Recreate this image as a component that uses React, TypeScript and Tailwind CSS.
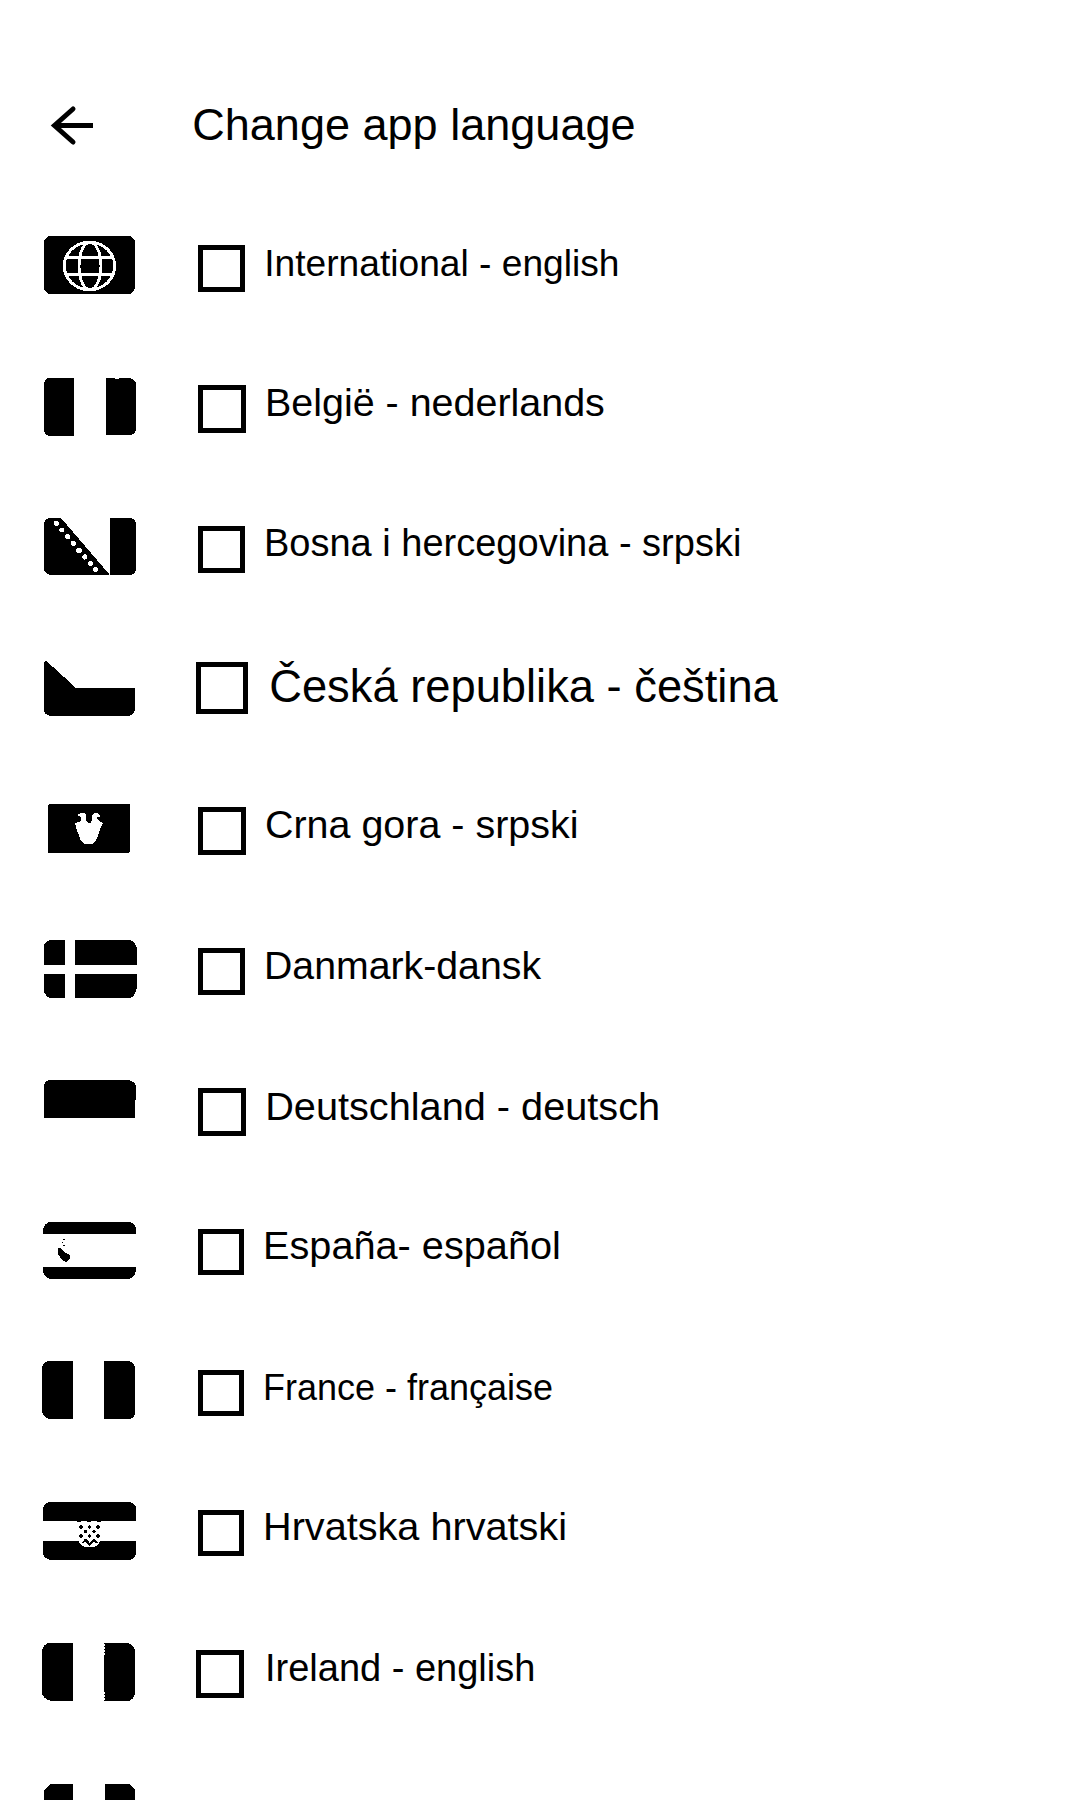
import type { ReactNode } from "react";

type Language = {
  label: string;
  // top edge of the row on the page; the flag drawings use page coordinates
  top: number;
  box: string;
  text: string;
  flag: ReactNode;
};

const languages: Language[] = [
  {
    label: "International - english",
    top: 220,
    box: "mt-[25px] ml-[62px] size-[47px]",
    text: "mt-[18px] ml-[19.3px] text-[37.15px]",
    flag: (
      <>
        <rect x="44" y="236" width="91" height="58" rx="7" />
        <g fill="none" stroke="#fff" strokeWidth="2.9">
          <ellipse cx="89.5" cy="266" rx="25.2" ry="23.8" />
          <ellipse cx="90" cy="266" rx="11" ry="23.8" />
          <path d="M66 257.5H113M66 274.5H113" />
        </g>
      </>
    ),
  },
  {
    label: "België - nederlands",
    top: 361,
    box: "mt-[24px] ml-[62px] size-[48px]",
    text: "mt-[16px] ml-[19px] text-[39.45px]",
    flag: (
      <>
        <path d="M50 378H74V436H51Q44 436 44 429V385Q44 378 50 378Z" />
        <path d="M106 378H115V379H119V378H130Q136 380 136 385V429Q136 434 130 435H106Z" />
      </>
    ),
  },
  {
    label: "Bosna i hercegovina - srpski",
    top: 502,
    box: "mt-[24px] ml-[62px] size-[47px]",
    text: "mt-[16px] ml-[19px] text-[38px]",
    flag: (
      <>
        <path d="M50 518H61L109 574V575H50Q44 573 44 568V524Q44 519 50 518Z" />
        <path d="M110 518H130Q136 519 136 525V568Q136 574 130 575H110Z" />
        <g fill="#fff">
          <circle cx="56.3" cy="523.3" r="2.5" />
          <circle cx="61.8" cy="530" r="2.5" />
          <circle cx="67.6" cy="536.6" r="2.6" />
          <circle cx="73.4" cy="543.5" r="2.6" />
          <circle cx="79" cy="550.3" r="2.8" />
          <circle cx="84.8" cy="557" r="2.6" />
          <circle cx="90.5" cy="563.5" r="2.6" />
          <circle cx="95.6" cy="569.5" r="2.6" />
        </g>
      </>
    ),
  },
  {
    label: "Česká republika - čeština",
    top: 643,
    box: "mt-[19px] ml-[60px] size-[52px]",
    text: "mt-[19px] ml-[21.2px] text-[45.3px]",
    flag: <path d="M44 662L46.5 661L76 688H135V709Q134 715 129 716H50Q44 714 44 710Z" />,
  },
  {
    label: "Crna gora - srpski",
    top: 784,
    box: "mt-[23px] ml-[62px] size-[48px]",
    text: "mt-[15px] ml-[19px] text-[39.45px]",
    flag: (
      <>
        <rect x="48" y="804" width="82" height="49" rx="2" />
        <path
          fill="#fff"
          d="M78.5 814L82 813H84L86 815L86 820L88 823H91L92 820V815L94 813H97L100 816L99 817H97L98 820L103 823L101 827L97 838L95 842L92 844H85L81 841L78 833L76 827L75 823L79 822L81 820V817L78 816Z"
        />
      </>
    ),
  },
  {
    label: "Danmark-dansk",
    top: 925,
    box: "mt-[23px] ml-[62px] size-[47px]",
    text: "mt-[15px] ml-[19px] text-[39.25px]",
    flag: (
      <>
        <path d="M50 940H65V965H44V947Q44 942 50 940ZM75 940H130Q136 942 137 949V965H75Z" />
        <path d="M44 974H65V998H50Q45 996 44 991ZM75 974H137V986Q136 996 130 998H75Z" />
      </>
    ),
  },
  {
    label: "Deutschland - deutsch",
    top: 1066,
    box: "mt-[22px] ml-[62px] size-[48px]",
    text: "mt-[15px] ml-[19.2px] text-[39.7px]",
    flag: <path d="M51 1080H129Q136 1082 136 1087V1100H135V1118H44V1085Q45 1080 51 1080Z" />,
  },
  {
    label: "España- español",
    top: 1207,
    box: "mt-[22px] ml-[62px] size-[46px]",
    text: "mt-[13px] ml-[19px] text-[39.7px]",
    flag: (
      <>
        <path d="M50 1222H130Q136 1224 136 1230V1234H43V1230Q44 1223 50 1222Z" />
        <path d="M43 1267H136V1271Q134 1278 129 1279H50Q44 1277 43 1271Z" />
        <path d="M58 1248H60L63 1251L66 1253L70 1255V1258L68 1260L66 1262L63 1261L60 1257L58 1254ZM63 1239H65V1240H63ZM62 1242H63V1243H62ZM63 1245H65V1246H63Z" />
      </>
    ),
  },
  {
    label: "France - française",
    top: 1348,
    box: "mt-[22px] ml-[62px] size-[46px]",
    text: "mt-[15px] ml-[19px] text-[36px]",
    flag: (
      <>
        <path d="M49 1361H73V1419H49Q43 1417 42 1412V1368Q43 1362 49 1361Z" />
        <path d="M104 1361H128Q134 1362 135 1368V1412Q135 1418 129 1419H104Z" />
      </>
    ),
  },
  {
    label: "Hrvatska hrvatski",
    top: 1489,
    box: "mt-[21px] ml-[62px] size-[46px]",
    text: "mt-[12px] ml-[19px] text-[39.65px]",
    flag: (
      <>
        <path d="M50 1502H130Q136 1504 136 1509V1521H43V1509Q44 1503 50 1502Z" />
        <path d="M43 1541H136V1553Q135 1559 129 1560H50Q43 1558 43 1552Z" />
        <path fill="#fff" d="M78 1540H101L98 1545L94 1547H85L81 1545Z" />
        <path d="M77 1521H81V1522H77ZM87 1521H91V1522H87ZM97 1521H101V1522H97Z" />
        <path
          stroke="#000"
          strokeWidth="3.6"
          strokeLinecap="round"
          d="M81 1527h.01M89.5 1527h.01M98 1527h.01M85.5 1531.5h.01M94 1531.5h.01M81 1536h.01M89.5 1536h.01M98 1536h.01"
        />
        <path d="M82 1543L84.5 1539H86.5L89.5 1542.5L93 1539H95L98 1543L96.5 1543.5L94 1541.5L90 1545.5H89L85.5 1541.5L83 1543.5Z" />
      </>
    ),
  },
  {
    label: "Ireland - english",
    top: 1630,
    box: "mt-[20px] ml-[60px] size-[48px]",
    text: "mt-[13px] ml-[21px] text-[38px]",
    flag: (
      <>
        <path d="M49 1643H73V1701H51Q43 1699 42 1693V1651Q43 1644 49 1643Z" />
        <path d="M105 1643H128Q134 1645 135 1650V1693Q134 1700 128 1701H105Z" />
        <path strokeDasharray="1 2" stroke="#000" strokeWidth="1" d="M104.5 1643V1655M104.5 1691V1701" />
        <path d="M104 1655H105V1691H104Z" />
      </>
    ),
  },
];

export default function App() {
  return (
    <main className="flex h-[1800px] w-[1080px] flex-col overflow-hidden bg-white font-['Liberation_Sans',Arial,sans-serif] text-black">
      <header className="flex h-[220px] shrink-0 items-start pt-[99px] pl-[50px]">
        <button aria-label="Back" className="mt-[6px] h-[42px] w-[46px]">
          <svg viewBox="50 105 46 42" width="46" height="42" fill="none" stroke="#000" strokeWidth="5">
            <path d="M55 125.5H93" />
            <path d="M73 109L54.5 125.5L73 142" strokeLinecap="round" />
          </svg>
        </button>
        <h1 className="mt-[1px] ml-[96.2px] text-[45.05px] leading-[50px] whitespace-nowrap">Change app language</h1>
      </header>
      <ul>
        {languages.map(({ label, top, box, text, flag }) => (
          <li key={label} className="flex h-[141px] items-start pl-[40px]">
            <svg
              className="shrink-0"
              width="96"
              height="100"
              viewBox={`40 ${top} 96 100`}
              overflow="visible"
              shapeRendering="crispEdges"
            >
              {flag}
            </svg>
            <span role="checkbox" aria-checked="false" aria-label={label} className={`shrink-0 border-[5px] border-black ${box}`} />
            <span className={`leading-[50px] whitespace-nowrap ${text}`}>{label}</span>
          </li>
        ))}
        <li className="flex h-[29px] items-start overflow-hidden pl-[40px]">
          <svg className="shrink-0" width="96" height="29" viewBox="40 1771 96 29" shapeRendering="crispEdges">
            <path d="M50 1784H73V1800H44V1790ZM105 1784H129L135 1790V1800H105Z" />
          </svg>
        </li>
      </ul>
    </main>
  );
}
